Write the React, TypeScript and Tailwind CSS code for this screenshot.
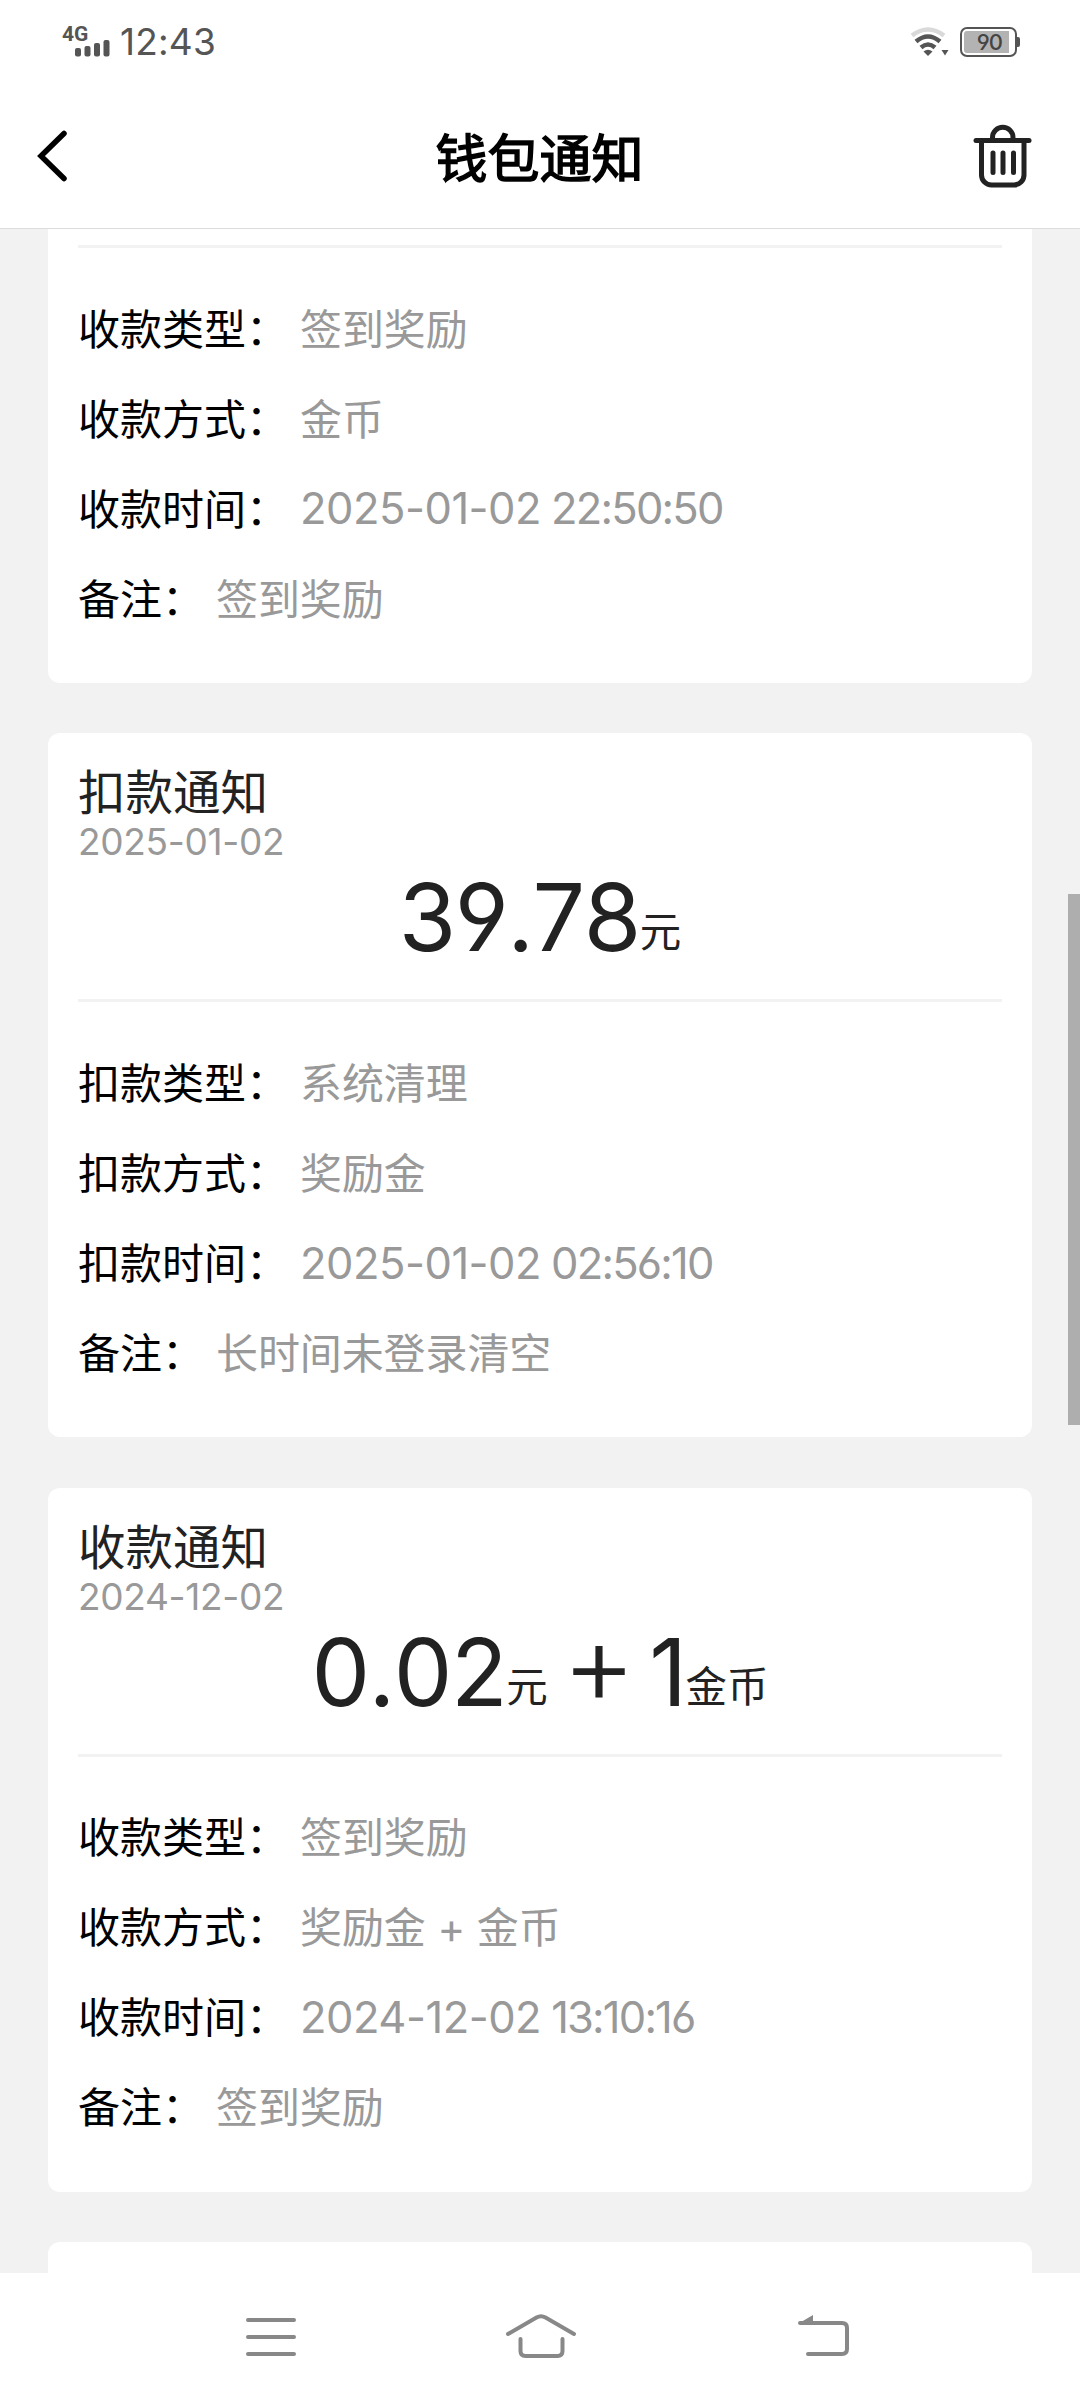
interface Amount {
  value: string;
  unit: string;
}

interface Row {
  label: string;
  value: string;
  time?: string;
}

interface Notice {
  title?: string;
  date?: string;
  amounts?: Amount[];
  rows: Row[];
}

const NOTICES: Notice[] = [
  {
    rows: [
      { label: '收款类型：', value: '签到奖励' },
      { label: '收款方式：', value: '金币' },
      { label: '收款时间：', value: '2025-01-02', time: '22:50:50' },
      { label: '备注：', value: '签到奖励' },
    ],
  },
  {
    title: '扣款通知',
    date: '2025-01-02',
    amounts: [{ value: '39.78', unit: '元' }],
    rows: [
      { label: '扣款类型：', value: '系统清理' },
      { label: '扣款方式：', value: '奖励金' },
      { label: '扣款时间：', value: '2025-01-02', time: '02:56:10' },
      { label: '备注：', value: '长时间未登录清空' },
    ],
  },
  {
    title: '收款通知',
    date: '2024-12-02',
    amounts: [
      { value: '0.02', unit: '元' },
      { value: '1', unit: '金币' },
    ],
    rows: [
      { label: '收款类型：', value: '签到奖励' },
      { label: '收款方式：', value: '奖励金 + 金币' },
      { label: '收款时间：', value: '2024-12-02', time: '13:10:16' },
      { label: '备注：', value: '签到奖励' },
    ],
  },
];

function StatusBar() {
  return (
    <div className="flex h-[84px] shrink-0 items-center justify-between pl-[62px] pr-[60px] text-[#555]">
      <div className="flex h-full items-center">
        <div className="relative h-[36px] w-[50px]">
          <span className="absolute left-0 top-0 font-['Roboto'] text-[21px] font-bold leading-[20px]">4G</span>
          <svg className="absolute left-[13px] top-[16px]" width="36" height="17" viewBox="0 0 36 17" fill="#555">
            <rect x="0" y="8" width="6" height="8.5" rx="2" />
            <rect x="9.5" y="6" width="6" height="10.5" rx="2" />
            <rect x="19" y="3" width="6" height="13.5" rx="2" />
            <rect x="28.5" y="0" width="6" height="16.5" rx="2" />
          </svg>
        </div>
        <span className="ml-[8px] text-[37px] leading-[44px] tracking-[0.2px]">12:43</span>
      </div>
      <div className="flex items-center gap-[11px]">
        <svg width="39" height="30" viewBox="0 0 39 30" fill="none">
          <path d="M2 8.5Q18 -3.5 34 8.5" stroke="#d9d9d9" strokeWidth="4.5" />
          <path d="M6 14.5Q18 4.5 30 14.5" stroke="#555" strokeWidth="4.5" />
          <path d="M11 20.5Q18 14.5 25 20.5" stroke="#555" strokeWidth="4.5" />
          <path d="M13.5 24.5Q18 21 22.5 24.5L18 29Z" fill="#555" />
          <path d="M31.5 23H38.5L35 28.5Z" fill="#555" />
        </svg>
        <div className="flex items-center">
          <div className="flex h-[30px] w-[57px] rounded-[7px] border-2 border-[#555] p-[2px]">
            <div className="flex h-full w-[45px] items-center justify-end rounded-l-[3px] bg-[#b3b3b3] pr-[7px] text-[22px] font-medium leading-none tracking-[-1px] text-[#444]">
              90
            </div>
          </div>
          <div className="h-[10px] w-[3px] rounded-r-[2px] bg-[#555]" />
        </div>
      </div>
    </div>
  );
}

function Header() {
  return (
    <div className="flex h-[145px] shrink-0 items-center justify-between border-b border-[#dcdcdc] pl-[36px] pr-[47px]">
      <svg width="60" height="56" viewBox="0 0 60 56" fill="none">
        <path d="M28 5.5L5 28L28 50.5" stroke="#000" strokeWidth="5.5" strokeLinecap="round" />
      </svg>
      <h1 className="ml-[10px] pt-[7px] text-[52px] leading-[64px] text-black [-webkit-text-stroke:1.5px_#000]">
        钱包通知
      </h1>
      <svg width="60" height="66" viewBox="0 0 60 66" fill="none" stroke="#222" strokeWidth="5">
        <path d="M19.5 17V14.5a10 10 0 0 1 20.5 0V17" />
        <path d="M3 17.5H56" strokeLinecap="round" />
        <path d="M8.5 18V52a10 10 0 0 0 10 10H41a10 10 0 0 0 10 -10V18" />
        <path d="M20 30V49.5M30 30V49.5M40.5 30V49.5" strokeLinecap="round" />
      </svg>
    </div>
  );
}

function NoticeCard({ notice }: { notice: Notice }) {
  return (
    <div
      className={
        notice.title
          ? 'rounded-[12px] bg-white px-[30px] pb-[39px] pt-[32px]'
          : 'rounded-b-[12px] bg-white px-[30px] pb-[39px] pt-[16px]'
      }
    >
      {notice.title && (
        <div className="h-[234px] text-[#222]">
          <p className="h-[55px] text-[47.5px] leading-[56px]">{notice.title}</p>
          <p className="h-[43px] text-[37px] leading-[44px] tracking-[-0.3px] text-[#999]">{notice.date}</p>
          <div className="flex items-baseline justify-center pt-[4px] leading-[100px] [font-kerning:none]">
            {notice.amounts?.map((a, i) => (
              <div key={a.unit} className="flex items-baseline">
                {i > 0 && (
                  <span className="ml-[14px] mr-[13px] -translate-y-[2px] text-[114px] font-light leading-[70px]">+</span>
                )}
                <span className="text-[93px] tracking-[-1.5px]">{a.value}</span>
                <span className="-translate-y-[4px] text-[41.5px]">{a.unit}</span>
              </div>
            ))}
          </div>
        </div>
      )}
      <div className="mb-[36px] h-[3px] bg-[#f2f2f2]" />
      {notice.rows.map((row) => (
        <div key={row.label} className="flex h-[90px] items-center gap-[12px] text-[42px]">
          <span className="text-black">{row.label}</span>
          {row.time ? (
            <span className="flex gap-[10px] text-[43.5px] text-[#999]">
              <span className="tracking-[-0.5px]">{row.value}</span>
              <span className="tracking-[-1.8px]">{row.time}</span>
            </span>
          ) : (
            <span className="tracking-[-0.1px] text-[#999]">{row.value}</span>
          )}
        </div>
      ))}
    </div>
  );
}

function NavBar() {
  return (
    <div className="flex h-[127px] shrink-0 items-center justify-between bg-white pl-[244px] pr-[229px] pt-[1px]">
      <svg width="54" height="44" viewBox="0 0 54 44" stroke="#888" strokeWidth="4" strokeLinecap="round">
        <path d="M4 5H50M4 22H50M4 39H50" />
      </svg>
      <svg
        className="mr-[14px]"
        width="76"
        height="46"
        viewBox="0 0 76 46"
        fill="none"
        stroke="#888"
        strokeWidth="4"
        strokeLinecap="round"
      >
        <path d="M5 20L33.5 3.5Q38 1 42.5 3.5L71 20" />
        <path d="M17.5 25V37Q17.5 42 22.5 42H54.5Q59.5 42 59.5 37V25" />
      </svg>
      <svg width="54" height="44" viewBox="0 0 54 44" fill="none" stroke="#888" strokeWidth="4">
        <path d="M3 8H45Q50 8 50 13V34Q50 39 45 39H11" strokeLinecap="round" />
        <path d="M1.500 8.500L16 0V8.500Z" fill="#888" stroke="none" />
      </svg>
    </div>
  );
}

export default function App() {
  return (
    <div className="relative flex h-[2400px] w-[1080px] flex-col overflow-hidden bg-white font-['Inter','Noto_Sans_CJK_SC',sans-serif] [font-feature-settings:'cv03','cv04']">
      <StatusBar />
      <Header />
      <div className="flex min-h-0 flex-1 flex-col gap-[50.3px] overflow-hidden bg-[#f2f2f2] px-[48px]">
        {NOTICES.map((n, i) => (
          <NoticeCard key={i} notice={n} />
        ))}
        <div className="h-[80px] shrink-0 rounded-t-[12px] bg-white" />
      </div>
      <NavBar />
      <div className="absolute right-0 top-[894px] h-[531px] w-[12px] bg-[#aeaeae]" />
    </div>
  );
}
